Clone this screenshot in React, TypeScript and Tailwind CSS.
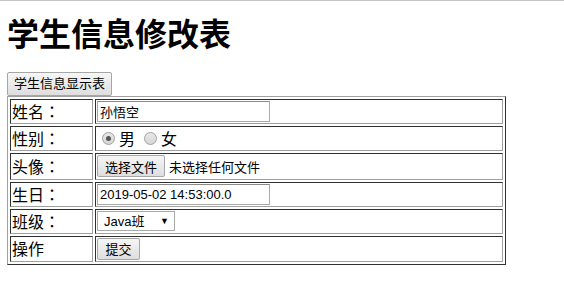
const CJK = "font-['Microsoft_YaHei','Noto_Sans_CJK_SC',sans-serif]";
const UI = "font-['Liberation_Sans','Noto_Sans_CJK_SC',sans-serif]";

const BTN = `${UI} rounded-[2px] border border-[#a6a6a6] bg-gradient-to-b from-[#f6f6f6] to-[#dedede] px-[6px] text-[13px] leading-none text-black`;

const CELL = "border border-t-[#303030] border-l-[#303030] border-b-[#a0a0a0] border-r-[#a0a0a0] p-px align-middle";

const INPUT = "block h-[21px] w-[173px] border border-[#a9a9a9] border-t-[#8a8a8a] px-[2px] text-[13px] outline-none";

// full-width colon centred, as in the reference
function Label({ text, colon = true }: { text: string; colon?: boolean }) {
  return (
    <>
      {text}
      {colon && <span className="font-['Noto_Sans_CJK_TC',sans-serif]">：</span>}
    </>
  );
}

function Radio({ checked, label }: { checked?: boolean; label: string }) {
  return (
    <span className="inline-flex items-center">
      <span className="mr-[4px] ml-[5px] flex h-[13px] w-[13px] items-center justify-center rounded-full border border-[#a0a0a0] bg-gradient-to-b from-[#e8e8e8] to-[#d6d6d6]">
        {checked && <span className="h-[5px] w-[5px] rounded-full bg-[#555]" />}
      </span>
      <span className="text-[16px]">{label}</span>
    </span>
  );
}

export default function App() {
  return (
    <div className={`min-h-[292px] w-[564px] border-t border-[#c4c4c4] bg-white px-[7px] text-black ${CJK}`}>
      <h1 className="mt-[8px] mb-[14px] text-[32px] font-bold leading-[46px]">学生信息修改表</h1>
      <button className={`${BTN} h-[24px]`}>学生信息显示表</button>
      <table className="w-[499px] border-separate border-spacing-[2px] border border-t-[#a0a0a0] border-l-[#a0a0a0] border-b-[#303030] border-r-[#303030] text-[16px] leading-[19px]">
        <tbody>
          <tr className="h-[25px]">
            <td className={`${CELL} w-[83px]`}><Label text="姓名" /></td>
            <td className={CELL}>
              <input readOnly value="孙悟空" className={`${CJK} ${INPUT}`} />
            </td>
          </tr>
          <tr className="h-[25px]">
            <td className={CELL}><Label text="性别" /></td>
            <td className={CELL}>
              <div className="flex items-center">
                <Radio checked label="男" />
                <span className="w-[4px]" />
                <Radio label="女" />
              </div>
            </td>
          </tr>
          <tr className="h-[27px]">
            <td className={CELL}><Label text="头像" /></td>
            <td className={CELL}>
              <div className="flex items-center">
                <button className={`${BTN} ${CJK} h-[22px] w-[68px] px-0`}>选择文件</button>
                <span className="ml-[4px] text-[13px]">未选择任何文件</span>
              </div>
            </td>
          </tr>
          <tr className="h-[25px]">
            <td className={CELL}><Label text="生日" /></td>
            <td className={CELL}>
              <input readOnly value="2019-05-02 14:53:00.0" className={`${UI} ${INPUT}`} />
            </td>
          </tr>
          <tr className="h-[25px]">
            <td className={CELL}><Label text="班级" /></td>
            <td className={CELL}>
              <div className={`${UI} flex h-[20px] w-[78px] items-center justify-between border border-[#a9a9a9] pl-[6px] pr-[5px] text-[13px]`}>
                <span>Java班</span>
                <span className="text-[9px]">▼</span>
              </div>
            </td>
          </tr>
          <tr className="h-[26px]">
            <td className={CELL}><Label text="操作" colon={false} /></td>
            <td className={CELL}>
              <button className={`${BTN} ${CJK} block h-[22px] w-[43px] px-0`}>提交</button>
            </td>
          </tr>
        </tbody>
      </table>
    </div>
  );
}
